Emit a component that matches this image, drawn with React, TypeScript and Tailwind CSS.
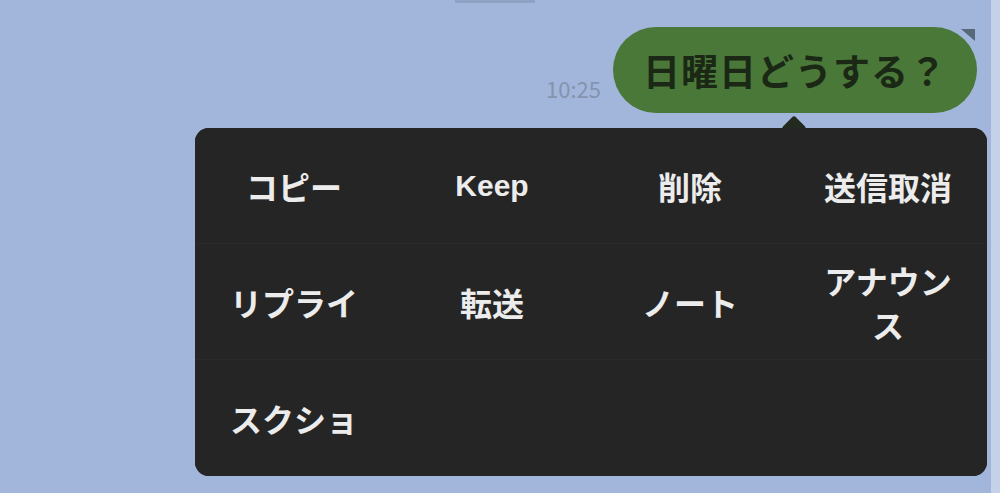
const items = ["コピー", "Keep", "削除", "送信取消", "リプライ", "転送", "ノート", "アナウンス", "スクショ"];

export default function App() {
  return (
    <div
      className="relative h-[493px] w-[1000px] overflow-hidden bg-[#a1b6da]"
      style={{ fontFamily: '"Noto Sans CJK JP", "Noto Sans", sans-serif' }}
    >
      <div className="absolute left-[455px] top-0 h-[3px] w-[80px] bg-[#8fa2c4]" />
      <div className="absolute right-0 top-0 h-full w-[9px] bg-[#c4d1e8]" />

      <div className="flex items-end justify-end gap-[12px] pr-[23px] pt-[27px]">
        <span className="mb-[14px] text-[22px] leading-none text-[#8593af]">10:25</span>
        <div className="relative flex h-[86px] w-[364px] items-center justify-center rounded-full bg-[#4a7838]">
          <span className="text-[37px] font-bold leading-none tracking-[1px] text-[#1a2815]">日曜日どうする？</span>
          <div className="absolute right-[2px] top-[2px] h-0 w-0 border-l-[14px] border-t-[12px] border-l-transparent border-t-[#56697a]" />
        </div>
      </div>

      <div className="relative ml-[195px] mt-[15px] w-[792px] rounded-[14px] bg-[#252525]">
        <div className="absolute left-[590px] top-[-9px] h-[18px] w-[18px] rotate-45 rounded-[3px] bg-[#22291f]" />
        <div className="relative grid grid-cols-4 grid-rows-[116px_116px_116px] rounded-[14px] bg-[#252525]">
          {items.map((t, i) => (
            <div
              key={t}
              className={
                "flex items-center justify-center px-[22px] text-center text-[32px] font-bold leading-[44px] text-[#ececec] " +
                (i < 8 ? "border-b border-[#2a2a2a]" : "")
              }
            >
              <span style={t === "Keep" ? { fontFamily: '"Liberation Sans", sans-serif', fontSize: "30px" } : undefined}>
                {t}
              </span>
            </div>
          ))}
        </div>
      </div>
    </div>
  );
}
